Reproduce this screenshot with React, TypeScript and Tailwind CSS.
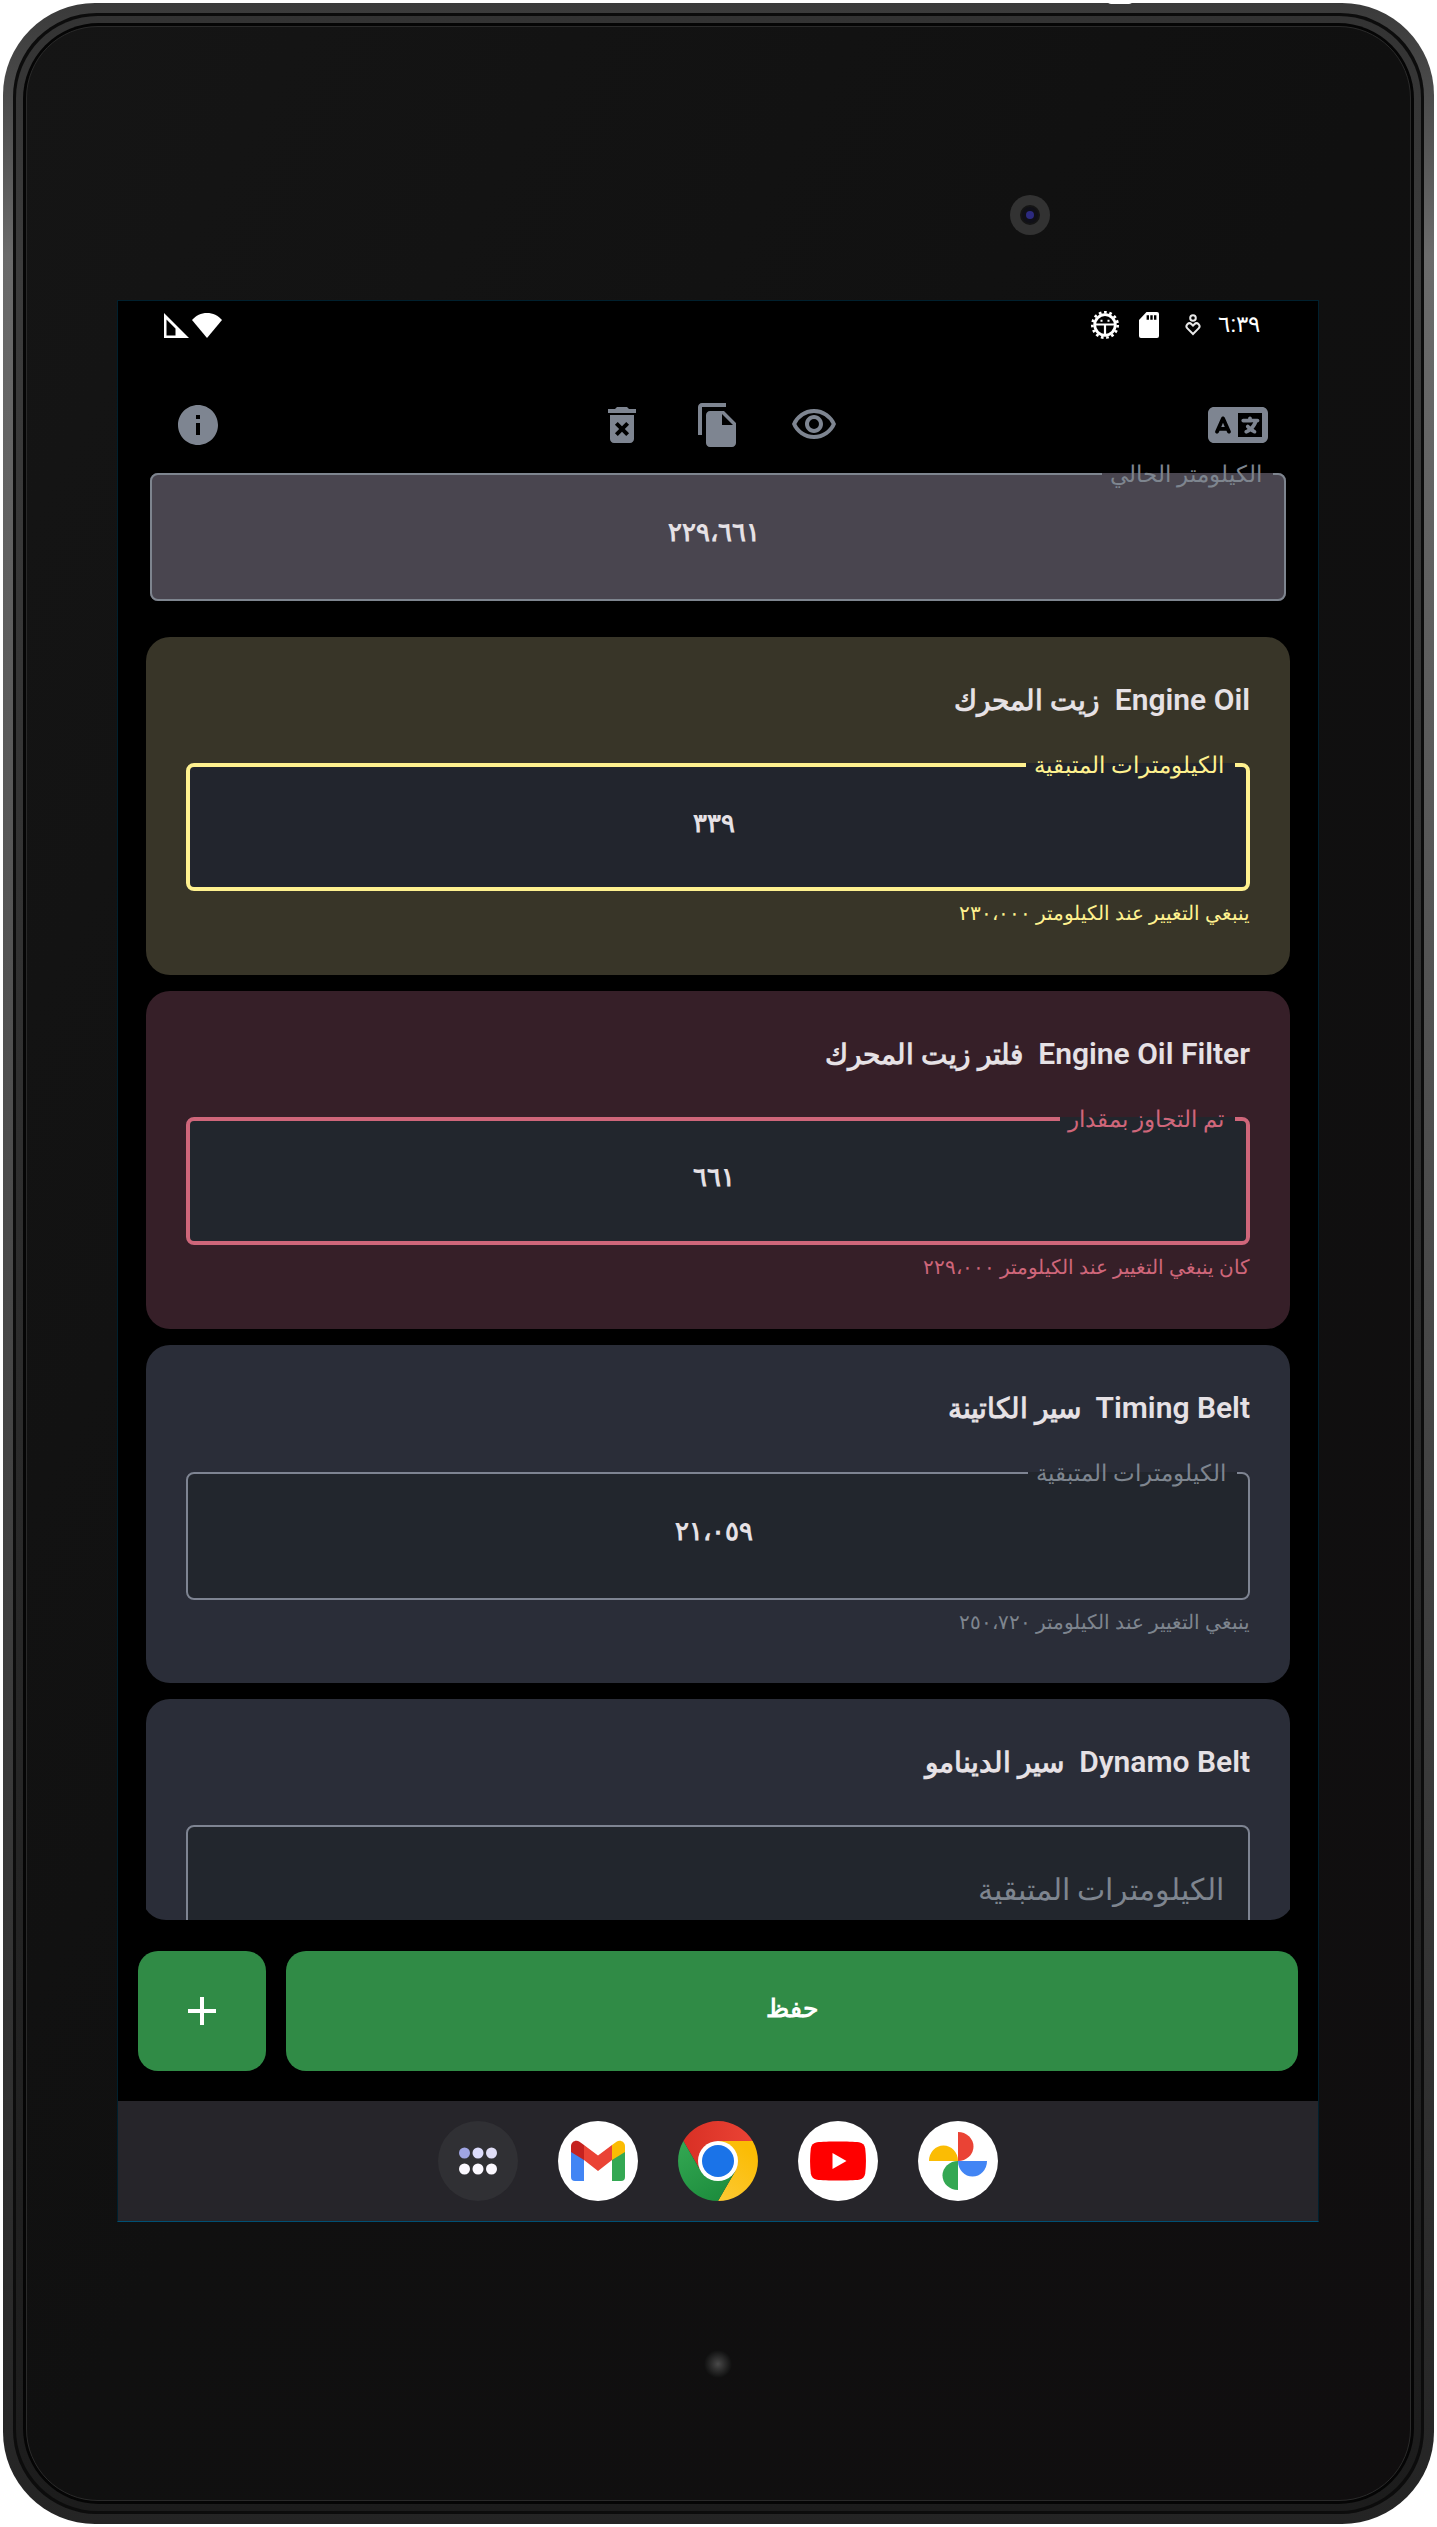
import React, { useState } from "react";
import { MdAdd, MdDeleteForever, MdFileCopy, MdInfo, MdOutlineVisibility } from "react-icons/md";
import { FaLanguage } from "react-icons/fa6";

type Tone = "current" | "warning" | "overdue" | "normal";

const toneStyles: Record<Tone, { card: string; field: string; label: string; helper: string }> = {
  current: {
    card: "",
    field: "border-2 border-[#7e858f] bg-[#49454f] pb-[25px]",
    label: "text-[#7e858f]",
    helper: "",
  },
  warning: {
    card: "bg-[#383528]",
    field: "border-4 border-[#fff18f] bg-[#22252d] pb-[22px]",
    label: "text-[#fff18f]",
    helper: "text-[#fff18f]",
  },
  overdue: {
    card: "bg-[#361f28]",
    field: "border-4 border-[#cf667a] bg-[#22262d] pb-[22px]",
    label: "text-[#cf667a]",
    helper: "text-[#cf667a]",
  },
  normal: {
    card: "bg-[#2a2d38]",
    field: "border-2 border-[#7e8492] bg-[#22262d] pb-[25px]",
    label: "text-[#7e858f]",
    helper: "text-[#7e858f]",
  },
};

function OutlinedField({ id, label, initial, tone }: { id: string; label: string; initial: string; tone: Tone }) {
  const [value, setValue] = useState(initial);
  const t = toneStyles[tone];
  return (
    <fieldset className={`rounded-lg px-[11px] ${t.field}`}>
      <legend className={`h-8 pr-[11px] pl-2 text-[23px] leading-[34px] font-medium ${t.label}`}>
        <label htmlFor={id}>{label}</label>
      </legend>
      <input
        id={id}
        value={value}
        onChange={(e) => setValue(e.target.value)}
        className="block h-[84px] w-full bg-transparent pr-2 text-center text-[26px] font-bold text-[#e6e1e5] outline-none"
      />
    </fieldset>
  );
}

function PartTitle({ latin, arabic }: { latin: string; arabic: string }) {
  return (
    <h2 className="h-12 text-[30px] leading-[46px] font-semibold whitespace-pre text-[#e6e1e5]">
      {latin}
      {"  "}
      <span className="text-[28px]">{arabic}</span>
    </h2>
  );
}

function PartCard({
  id,
  latin,
  arabic,
  label,
  value,
  helper,
  tone,
}: {
  id: string;
  latin: string;
  arabic: string;
  label: string;
  value: string;
  helper: string;
  tone: Tone;
}) {
  const t = toneStyles[tone];
  return (
    <section className={`flex h-[338px] flex-col rounded-3xl px-10 pt-10 ${t.card}`}>
      <PartTitle latin={latin} arabic={arabic} />
      <div className="mt-6">
        <OutlinedField id={id} label={label} initial={value} tone={tone} />
      </div>
      <p className={`mt-1 text-xl leading-9 ${t.helper}`}>{helper}</p>
    </section>
  );
}

function DebugIcon() {
  return (
    <svg viewBox="0 0 28 28" className="size-7" fill="none" stroke="#fff">
      <circle cx="14" cy="14" r="12.700" strokeWidth="2.600" strokeDasharray="2.660 2.660" />
      <circle cx="14" cy="14" r="10.300" strokeWidth="2.800" />
      <path d="M4 13.500h20M14 14v10" strokeWidth="2.200" />
      <path d="M9.500 9.800h2M16.500 9.800h2" strokeWidth="2" />
    </svg>
  );
}

function SdCardIcon() {
  return (
    <svg viewBox="0 0 20 26" className="h-[26px] w-5">
      <path
        fill="#fff"
        fillRule="evenodd"
        d="M7.5 0H18a2 2 0 0 1 2 2v22a2 2 0 0 1-2 2H2a2 2 0 0 1-2-2V8zM7.6 3.2v4.6H10V3.2zM11.3 3.2v4.6h2.4V3.2zM15 3.2v4.6h2.4V3.2z"
      />
    </svg>
  );
}

function WellbeingIcon() {
  return (
    <svg viewBox="0 0 16 22" className="h-[22px] w-4" fill="none" stroke="#e8e8e8" strokeWidth="2">
      <circle cx="8" cy="4" r="2.8" />
      <path d="M8 20 2.400 14.400a3 3 0 0 1 0-4.200 3 3 0 0 1 4.200 0L8 11.600l1.400-1.400a3 3 0 0 1 4.200 0 3 3 0 0 1 0 4.200z" />
    </svg>
  );
}

function SignalIcons() {
  return (
    <div className="flex items-center gap-[3px]" dir="ltr">
      <svg viewBox="0 0 25 25" className="size-[25px]">
        <path fill="#fff" fillRule="evenodd" d="M0 0l25 25H0zM2.500 6.500V22.500H11.500V15.500z" />
      </svg>
      <svg viewBox="0 0 30 25" className="h-[25px] w-[30px]">
        <path fill="#fff" d="M15 25 0 7C4 2.500 9 0 15 0s11 2.500 15 7z" />
      </svg>
    </div>
  );
}

function AppsIcon() {
  return (
    <svg viewBox="0 0 80 80" className="size-20">
      <circle cx="40" cy="40" r="40" fill="#303034" />
      <circle cx="26.500" cy="32" r="5.500" fill="#a0a5e4" />
      <circle cx="40" cy="32" r="5.500" fill="#dcdcfc" />
      <circle cx="53.500" cy="32" r="5.500" fill="#dfddf6" />
      <circle cx="26.500" cy="48" r="5.500" fill="#fbf8ff" />
      <circle cx="40" cy="48" r="5.500" fill="#fbf8ff" />
      <circle cx="53.500" cy="48" r="5.500" fill="#fbf8ff" />
    </svg>
  );
}

function GmailIcon() {
  return (
    <svg viewBox="0 0 80 80" className="size-20">
      <circle cx="40" cy="40" r="40" fill="#fff" />
      <path fill="#4285f4" d="M13 30v26a4 4 0 0 0 4 4h9V38z" />
      <path fill="#34a853" d="M67 30v26a4 4 0 0 1-4 4h-9V38z" />
      <path fill="#ea4335" d="M26 24 40 34.500 54 24v15L40 50 26 39z" />
      <path fill="#fbbc04" d="M54 24l4.500-3.300c3.500-2.500 8.500 0 8.500 4.500V31l-13 8z" />
      <path fill="#c5221f" d="M26 24l-4.500-3.300c-3.500-2.500-8.500 0-8.500 4.500V31l13 8z" />
    </svg>
  );
}

function ChromeIcon() {
  return (
    <svg viewBox="0 0 80 80" className="size-20">
      <defs>
        <linearGradient id="chromeRed" x1="0" x2="1">
          <stop offset="0" stopColor="#d93025" />
          <stop offset="1" stopColor="#ea4335" />
        </linearGradient>
        <linearGradient id="chromeGreen" x1="0" y1="0" x2=".6" y2="1">
          <stop offset="0" stopColor="#34a853" />
          <stop offset="1" stopColor="#1e8e3e" />
        </linearGradient>
        <linearGradient id="chromeYellow" x1=".5" y1="0" x2="0" y2="1">
          <stop offset="0" stopColor="#fbbc04" />
          <stop offset="1" stopColor="#fcc934" />
        </linearGradient>
      </defs>
      <path fill="url(#chromeRed)" d="M5.400 20a40 40 0 0 1 69.200 0H40v20l-17.300 10z" />
      <path fill="url(#chromeYellow)" d="M74.600 20A40 40 0 0 1 40 80L57.300 50 40 20z" />
      <path fill="url(#chromeGreen)" d="M5.400 20A40 40 0 0 0 40 80l17.300-30L40 40 22.700 50z" />
      <circle cx="40" cy="40" r="20" fill="#fff" />
      <circle cx="40" cy="40" r="16" fill="#1a73e8" />
    </svg>
  );
}

function YoutubeIcon() {
  return (
    <svg viewBox="0 0 80 80" className="size-20">
      <circle cx="40" cy="40" r="40" fill="#fff" />
      <path
        fill="#f00"
        d="M40 20.500c8 0 16.500.2 21 .8 3.500.5 5.700 2.700 6.200 6.200 1 8 1 17 0 25-.5 3.500-2.700 5.700-6.200 6.200-8 1.100-34 1.100-42 0-3.500-.5-5.700-2.700-6.200-6.200-1-8-1-17 0-25 .5-3.500 2.700-5.700 6.200-6.200 4.500-.6 13-.8 21-.8z"
      />
      <path fill="#fff" d="M34.500 32v16L48.500 40z" />
    </svg>
  );
}

function PhotosIcon() {
  return (
    <svg viewBox="0 0 80 80" className="size-20">
      <circle cx="40" cy="40" r="40" fill="#fff" />
      <path fill="#ea4335" d="M40 11a15.500 14.500 0 0 1 0 29z" />
      <path fill="#4285f4" d="M69 40a14.500 15.500 0 0 1-29 0z" />
      <path fill="#34a853" d="M40 69a15.500 14.500 0 0 1 0-29z" />
      <path fill="#fbbc04" d="M11 40a14.500 15.500 0 0 1 29 0z" />
    </svg>
  );
}

const dockApps = [
  { name: "Apps", Icon: AppsIcon },
  { name: "Gmail", Icon: GmailIcon },
  { name: "Chrome", Icon: ChromeIcon },
  { name: "YouTube", Icon: YoutubeIcon },
  { name: "Photos", Icon: PhotosIcon },
];

function Screen() {
  return (
    <div
      dir="rtl"
      className="flex aspect-[601/961] flex-col border border-[#00202e] border-b-[#005074] bg-black font-[Roboto,'Noto_Sans',sans-serif]"
    >
      <div className="flex h-12 items-center justify-between pr-[58px] pl-[46px]">
        <div className="flex items-center text-white">
          <span className="w-10 text-[23px]">٦:٣٩</span>
          <span className="mr-[19px]">
            <WellbeingIcon />
          </span>
          <span className="mr-[26px]">
            <SdCardIcon />
          </span>
          <span className="mr-5">
            <DebugIcon />
          </span>
        </div>
        <SignalIcons />
      </div>

      <header className="mt-[52px] flex h-12 items-center justify-between px-[50px] text-[#7e8591]">
        <button aria-label="اللغة" className="flex w-[60px] justify-center">
          <FaLanguage className="h-12 w-[60px]" />
        </button>
        <div className="flex gap-12">
          <button aria-label="عرض">
            <MdOutlineVisibility className="size-12" />
          </button>
          <button aria-label="نسخ">
            <MdFileCopy className="size-12" />
          </button>
          <button aria-label="حذف">
            <MdDeleteForever className="size-12" />
          </button>
        </div>
        <button aria-label="معلومات" className="flex w-[60px] justify-center">
          <MdInfo className="size-12" />
        </button>
      </header>

      <main className="mx-6 min-h-0 flex-1 overflow-hidden rounded-b-3xl px-1 pt-[9px]">
        <div className="mx-1 mb-9">
          <OutlinedField id="current" label="الكيلومتر الحالي" initial="٢٢٩،٦٦١" tone="current" />
        </div>
        <div className="flex flex-col gap-4">
          <PartCard
            id="oil"
            latin="Engine Oil"
            arabic="زيت المحرك"
            label="الكيلومترات المتبقية"
            value="٣٣٩"
            helper="ينبغي التغيير عند الكيلومتر ٢٣٠،٠٠٠"
            tone="warning"
          />
          <PartCard
            id="filter"
            latin="Engine Oil Filter"
            arabic="فلتر زيت المحرك"
            label="تم التجاوز بمقدار"
            value="٦٦١"
            helper="كان ينبغي التغيير عند الكيلومتر ٢٢٩،٠٠٠"
            tone="overdue"
          />
          <PartCard
            id="timing"
            latin="Timing Belt"
            arabic="سير الكاتينة"
            label="الكيلومترات المتبقية"
            value="٢١،٠٥٩"
            helper="ينبغي التغيير عند الكيلومتر ٢٥٠،٧٢٠"
            tone="normal"
          />
          <section className="flex h-[338px] flex-col gap-[38px] rounded-3xl bg-[#2a2d38] px-10 pt-10">
            <PartTitle latin="Dynamo Belt" arabic="سير الدينامو" />
            <input
              aria-label="الكيلومترات المتبقية"
              placeholder="الكيلومترات المتبقية"
              className="block h-32 w-full rounded-lg border-2 border-[#7e8492] bg-[#22262d] px-6 text-[30px] text-[#e6e1e5] outline-none placeholder:text-[#7e858f]"
            />
          </section>
        </div>
      </main>

      <div className="flex gap-5 px-5 pt-[31px] pb-[30px]">
        <button className="h-[120px] flex-1 rounded-[20px] bg-[#308b46] pb-1 text-[25px] font-bold text-white">
          حفظ
        </button>
        <button aria-label="إضافة" className="flex h-[120px] w-32 items-center justify-center rounded-[20px] bg-[#308b46]">
          <MdAdd className="size-12 text-white" />
        </button>
      </div>

      <nav dir="ltr" className="flex h-[120px] items-center justify-center gap-10 bg-[#26252a]">
        {dockApps.map(({ name, Icon }) => (
          <button key={name} aria-label={name} className="rounded-full">
            <Icon />
          </button>
        ))}
      </nav>
    </div>
  );
}

export default function App() {
  return (
    <div className="bg-white p-[3px]">
      <div className="relative rounded-[92px] bg-linear-to-b from-[#3a3a3a] via-[#6b6b6b] via-10% to-[#242424] p-[10px]">
        <div className="absolute -top-1 right-[21%] h-[5px] w-7 rounded-b-full bg-white" />
        <div className="rounded-[84px] bg-[#0c0c0c] p-[3px]">
          <div className="rounded-[82px] bg-linear-to-b from-[#333] via-[#3c3c3c] via-10% to-[#1c1c1c] p-[7px]">
            <div className="rounded-[76px] bg-[#050505] p-[3px]">
              <div className="rounded-[72px] border border-[#2a2a2a] bg-linear-to-br from-[#151515] via-[#101010] to-[#100e0f] pr-[91px] pl-[90px]">
                <div className="flex h-[273px] justify-end pt-[168px] pr-[269px]">
                  <div className="flex size-10 items-center justify-center rounded-full bg-[#323232]">
                    <div className="flex size-5 items-center justify-center rounded-full border-2 border-[#151515] bg-[#101018]">
                      <div className="size-2 rounded-full bg-[#2c2a80]" />
                    </div>
                  </div>
                </div>
                <Screen />
                <div className="flex h-[278px] justify-center pt-[128px]">
                  <div className="size-7 rounded-full bg-radial from-[#4a4a4a] to-[#101010] to-70%" />
                </div>
              </div>
            </div>
          </div>
        </div>
      </div>
    </div>
  );
}
